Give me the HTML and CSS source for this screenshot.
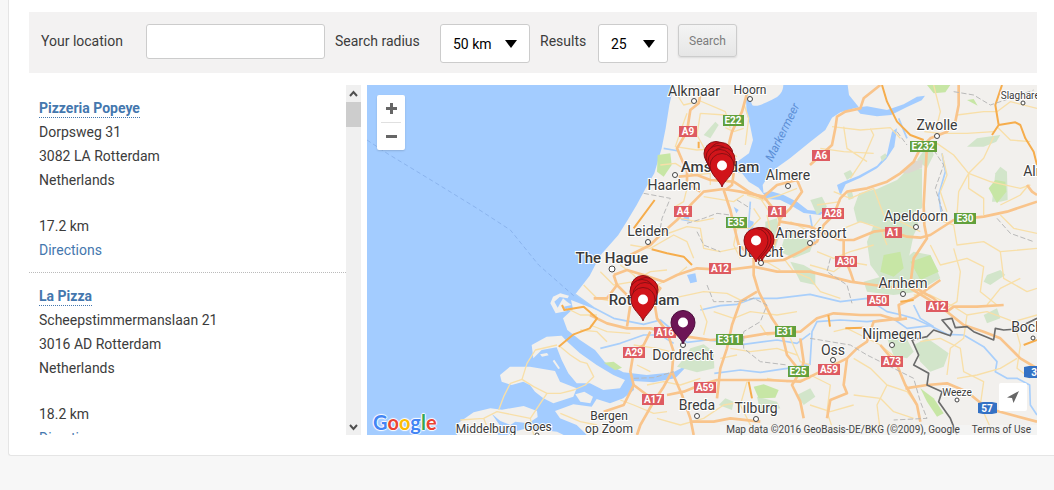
FILE: index.html
```
<!DOCTYPE html>
<html lang="en">
<head>
  <meta charset="UTF-8">
  <title>Store Locator</title>
  <link rel="stylesheet" href="styles.css">
</head>
<body>
  <main class="panel">
    <form class="search">
      <label class="wide" for="location">Your location</label>
      <input type="text" id="location">
      <label class="wide" for="radius">Search radius</label>
      <select id="radius" class="radius">
        <option>10 km</option>
        <option>25 km</option>
        <option selected>50 km</option>
        <option>100 km</option>
      </select>
      <label for="results">Results</label>
      <select id="results">
        <option selected>25</option>
        <option>50</option>
        <option>75</option>
      </select>
      <button type="button">Search</button>
    </form>

    <div class="locator">
      <div class="stores">
        <ul class="store-list">
          <li>
            <a class="name" href="#">Pizzeria Popeye</a>
            <p>Dorpsweg 31</p>
            <p>3082 LA Rotterdam</p>
            <p>Netherlands</p>
            <p class="distance">17.2 km</p>
            <a class="directions" href="#">Directions</a>
          </li>
          <li>
            <a class="name" href="#">La Pizza</a>
            <p>Scheepstimmermanslaan 21</p>
            <p>3016 AD Rotterdam</p>
            <p>Netherlands</p>
            <p class="distance">18.2 km</p>
            <a class="directions" href="#">Directions</a>
          </li>
        </ul>
        <div class="scrollbar">
          <svg width="15" height="17" viewBox="0 0 15 17"><path d="M4 11L7.500 7L11 11"/></svg>
          <div class="thumb"></div>
          <svg width="15" height="17" viewBox="0 0 15 17"><path d="M4 7L7.500 11L11 7"/></svg>
        </div>
      </div>

      <div class="map">
        <svg class="canvas" viewBox="0 0 670 350" preserveAspectRatio="xMinYMin slice">
          <defs>
            <g id="pin">
              <path d="M0 0C-1.500-6-12-12-12-21.500A12 12 0 0 1 12-21.500C12-12 1.500-6 0 0Z"/>
              <circle cy="-21.500" r="5"/>
            </g>
          </defs>

          <!-- terrain and roads, drawn at three times the size -->
          <svg width="670" height="350" viewBox="0 0 2010 1050">
            <rect class="sea" width="2010" height="1050"/>
            <path class="ferry" d="M0 165L60 205L200 290L330 370L430 435L515 540L620 632"/>

            <g class="land">
              <path d="M921 0L907 60L896 130L884 190L862 265L836 310L809 360L782 405L754 450L699 512L668 572L625 628L690 675L612 645L618 672L588 700L601 735L639 765L684 795L714 832L769 862L839 870L919 862L965 838L925 880L859 892L799 888L801 915L769 940L729 955L689 942L674 965L619 958L564 978L579 1000L629 1020L650 1040L659 1050H2010V0Z"/>
              <path d="M494 780L539 755L584 752L601 770L639 805L689 840L739 870L774 885L759 910L709 915L669 895L629 895L604 865L584 825L569 787L524 795L499 820Z"/>
              <path d="M399 870L429 845L489 845L564 858L579 890L629 910L619 935L559 955L529 940L504 920L489 900L469 890L434 900L404 890Z"/>
              <path d="M265 1020L320 982L370 970L405 974L470 963L510 978L512 996L484 1015L445 1010L430 1020L400 1008L374 986L400 1023L392 1050H270Z"/>
              <path d="M420 1050L450 1038L480 1030L570 1040L590 1050Z"/>
              <path d="M625 928L652 920L678 935L670 955L640 950Z"/>
              <path d="M550 655L558 635L580 625L606 632L602 640L578 636L562 650L572 668L588 640L600 650L614 660L590 665L600 678L566 685Z"/>
              <path d="M519 808L540 804L545 811L525 815ZM557 828L562 824L579 850L574 852Z"/>
            </g>

            <g class="lake">
              <path d="M1249 0C1248 20 1239 34 1215 44C1190 55 1172 67 1156 61L1145 32L1137 40L1139 86L1149 120L1158 165L1146 205L1118 225L1100 240L1090 262L1125 265L1145 290L1175 308L1190 328L1187 300L1212 260L1269 220L1330 170L1375 135L1395 98L1420 82L1475 66L1446 30L1442 0Z"/>
              <path d="M1465 68L1500 64L1560 75L1610 58L1650 35L1674 32L1664 46L1620 66L1572 90L1530 94L1480 86Z"/>
              <path d="M1188 325L1210 318L1250 330L1290 350L1322 375L1370 380L1360 390L1310 384L1270 360L1240 345L1200 342Z"/>
              <path d="M1410 300L1430 290L1475 272L1530 242L1560 208L1575 140L1590 130L1582 185L1558 222L1530 250L1480 278L1436 298L1420 332Z"/>
              <path d="M1080 235L1020 228L1015 233L1080 245ZM940 405L965 388L968 410ZM1145 405L1160 410L1158 440L1147 435Z"/>
              <path d="M960 570L985 565L990 590L970 595ZM1100 365L1115 375L1108 385Z"/>
            </g>

            <g class="forest">
              <path d="M1476 325L1530 312L1590 285L1620 255L1665 250L1665 370L1640 380L1655 420L1640 450L1625 520L1640 560L1600 610L1540 580L1510 540L1500 470L1520 420L1470 410L1460 370Z"/>
              <path d="M1650 225L1690 170L1700 210L1680 250Z"/>
              <path d="M1640 500L1690 510L1720 580L1650 620L1580 630L1500 620L1490 590L1560 570Z"/>
              <path d="M1800 185L1830 160L1900 150L1888 170L1850 185Z"/>
              <path d="M970 790L1010 778L1040 800L1042 850L990 862L930 845L955 815Z"/>
              <path d="M1640 780L1680 760L1710 780L1745 805L1730 845L1690 860L1660 830Z"/>
              <path d="M1560 760L1610 745L1640 800L1620 820L1580 812Z"/>
              <path d="M1195 410L1230 400L1240 445L1225 490L1195 480Z"/>
              <path d="M1260 430L1290 450L1340 470L1329 500L1280 520L1240 500Z"/>
              <path d="M1330 345L1365 335L1380 365L1350 390Z"/>
              <path d="M1055 960L1075 940L1100 950L1095 975Z"/>
              <path d="M1860 570L1900 555L1915 570L1870 600L1850 590Z"/>
              <path d="M1885 265L1900 245L1920 260L1922 345L1900 350L1875 350Z"/>
              <path d="M1170 935L1230 950L1240 970L1180 980Z"/>
              <path d="M1290 930L1330 910L1345 935L1310 960Z"/>
              <path d="M1270 530L1310 540L1345 560V600L1300 590Z"/>
              <path d="M1850 690L1890 670L1900 700L1860 715Z"/>
              <path d="M1010 150L1045 110L1055 120L1030 160Z"/>
              <path d="M1430 265L1450 255L1460 270L1440 285ZM1440 325L1455 320L1460 340L1445 345ZM1540 215L1555 205L1560 215L1545 230Z"/>
            </g>
            <g class="park">
              <path d="M872 210L910 205L914 240L890 275L870 260Z"/>
              <path d="M1865 310L1885 285L1915 290L1918 320L1890 355Z"/>
              <path d="M1550 510L1600 500L1610 550L1580 575L1540 560ZM1630 530L1690 510L1715 560L1660 585Z"/>
              <path d="M1160 905L1190 898L1235 915L1225 938L1175 940Z"/>
              <path d="M1660 910L1700 940L1730 985L1710 995L1680 950Z"/>
              <path d="M1800 45L1820 42L1832 62ZM1680 0H1750L1735 22L1700 25Z"/>
              <path d="M710 833L740 830L765 848L745 856Z"/>
            </g>
            <path class="moor" d="M1600 265L1640 228L1668 225L1665 248L1625 265Z"/>

            <g class="river">
              <path d="M625 628L680 668L740 700L830 718L880 705L920 738L960 772L1020 765L1130 778L1230 765L1290 775L1330 745"/>
              <path d="M700 790L760 775L830 750L880 750L920 775M1000 675L1060 662L1110 658L1160 640L1230 640L1329 628L1420 650L1500 640L1560 680L1605 690L1640 700L1690 722L1740 748L1790 750L1850 785L1890 830L1885 860L1920 880L1950 880L1988 900L1990 960L2010 990"/>
              <path d="M1042 865L1120 855L1180 862L1260 850L1329 838L1335 740L1350 710L1420 705L1500 710L1580 702L1620 730L1690 722"/>
              <path d="M1640 660L1660 700L1700 725M1595 100L1620 160M1725 205L1735 260L1715 330L1725 400"/>
              <path d="M1150 350L1145 420L1150 500M1329 390L1345 480M890 190L935 198"/>
            </g>

            <!-- local roads -->
            <g class="minor">
              <path d="M921 15L950 60L1000 48L1075 80L1090 130M960 85L940 140L925 185L990 195L1060 190L1110 215M1000 85L1075 90M1000 85L990 150L1020 205"/>
              <path d="M880 240L925 235L980 270L1030 265L1030 300M905 290L960 310L950 350L925 365L940 400L990 410L1040 400M1010 335L1100 350L1130 330"/>
              <path d="M850 425L890 450L960 425L1000 430L1010 490L1060 500L1130 485M790 480L850 490L920 450L960 470L980 520"/>
              <path d="M1130 130L1100 140L1075 128M1130 55L1145 100L1135 180M1140 330L1190 345L1240 330L1290 310M1180 340L1210 385L1260 380"/>
              <path d="M1160 370L1180 400L1150 430L1110 430L1100 480L1120 520M1200 390L1210 440L1180 520L1240 555"/>
              <path d="M1270 410L1329 440L1360 400L1400 390L1420 370M1250 520L1280 560L1329 580L1360 620L1420 640"/>
              <path d="M1395 125L1480 135L1570 128L1600 160M1430 125L1440 190L1500 230M1510 130L1520 150L1490 220L1450 280M1360 190L1430 200L1520 205"/>
              <path d="M1700 0L1720 80L1710 120M1770 90L1850 80L1890 80L1930 50L2010 70M1890 125L1930 165L1990 170"/>
              <path d="M1710 175L1760 210L1805 265L1870 290L1960 310L1990 300M1880 155L1850 220L1805 265L1775 320L1770 390M1725 205L1740 270L1720 320L1740 380"/>
              <path d="M1672 140L1720 145L1800 145L1880 140M1700 400L1760 420L1770 480L1850 470L1900 500L2010 490"/>
              <path d="M1805 265L1805 310L1850 340L1850 390M1900 360L1960 330L1985 300M1900 390L1940 430L2010 445"/>
              <path d="M1690 480L1720 540L1800 520L1850 545L1840 620L1890 660M1760 490L1780 560L1770 650L1720 680"/>
              <path d="M1400 320L1450 340L1520 310L1550 390L1600 410L1660 440M1430 430L1480 410L1540 430L1560 480"/>
              <path d="M1350 360L1420 350M1350 500L1400 520L1450 500L1520 480M1329 540L1400 560L1440 530L1500 540"/>
              <path d="M1640 630L1690 630L1760 665L1800 690L1860 680L1940 710L2010 690M1800 690L1790 760L1750 790L1740 870"/>
              <path d="M1660 770L1720 760L1780 790L1790 860L1850 890L1840 960L1880 1050M1770 880L1830 870L1900 850L1950 820"/>
              <path d="M1900 500L1910 580L1980 620L2010 610M1860 660L1900 610L1960 580M1940 710L1960 780L1950 850L1990 880"/>
              <path d="M1460 820L1510 850L1560 900L1620 920L1650 960M1460 930L1540 940L1580 980L1640 1000M1560 900L1530 960L1540 1040"/>
              <path d="M1400 740L1440 730L1480 750L1540 780L1600 830M1330 870L1390 900L1380 980L1400 1040M1329 960L1390 980L1460 960"/>
              <path d="M700 560L740 600L800 590L850 560L900 555M650 600L690 640L740 650M690 690L640 690L600 670M670 720L720 740L790 745"/>
              <path d="M760 540L800 570L860 640L900 660M820 620L870 600L930 570L960 545M880 650L940 635L1010 620L1080 625L1130 650"/>
              <path d="M1000 660L1020 710L1010 750M1040 680L1100 700L1150 680L1230 690L1290 680M1090 790L1150 800L1230 790L1290 810M1060 820L1110 810"/>
              <path d="M640 735L690 740L720 770M800 780L870 790L910 800M810 840L850 860M760 945L800 960L860 985L900 980"/>
              <path d="M840 900L890 890L940 900L1000 880M870 1000L940 1020L1010 1000L1070 960L1130 950L1180 970M1140 890L1120 960L1160 1040"/>
              <path d="M580 785L610 810L640 830L660 835L680 875L655 900L620 915L580 925L540 925L500 905L465 883L430 895L410 935L395 975"/>
              <path d="M465 883L480 835L505 795L570 780M280 1005L350 1000L390 980L490 1000L540 925M350 1000L370 1050M490 1000L500 1050M580 985L640 1010L690 1020"/>
              <path d="M1200 880L1260 890L1330 880M1270 760L1300 830L1329 840M1180 720L1200 750L1240 745"/>
            </g>

            <g class="major">
              <path d="M1000 30L995 55L970 75L960 140L930 190L945 225L960 260L960 295L1000 320"/>
              <path d="M1140 25L1125 80L1095 140L1080 200L1100 265L1095 300L1075 315"/>
              <path d="M935 275L990 270L1030 285L1100 290L1145 320L1190 340"/>
              <path d="M790 510L850 480L890 440L930 405L975 355L1010 320L1070 312L1120 320L1190 335L1230 385L1240 410L1329 425L1420 465L1460 465L1520 440L1560 435L1620 455L1660 458L1690 450L1760 405L1850 395L1920 380L2010 350"/>
              <path d="M1070 315L1090 375L1105 440L1115 480L1160 520L1160 570L1175 620L1215 700L1245 745L1260 810L1300 860"/>
              <path d="M1329 240L1395 180L1405 130L1410 95L1435 80L1480 70L1490 40L1540 0"/>
              <path d="M1190 335L1230 300L1290 285L1305 320L1270 370L1240 400L1230 450L1210 510"/>
              <path d="M1180 530L1250 525L1300 500L1350 470L1370 420L1400 390L1420 340L1440 320L1500 310L1560 290L1600 265L1640 230L1660 190L1690 160L1740 140L1765 110L1775 60L1775 0"/>
              <path d="M1680 180L1675 270L1670 360L1672 420L1680 460L1660 490L1640 520L1630 600L1700 640L1740 680"/>
              <path d="M740 570L780 555L830 570L890 590L930 570L990 550L1080 555L1160 545L1230 560L1329 560L1450 590L1520 600L1600 610M1630 610L1680 640L1740 680L1790 720L1850 740L1900 760L1960 820L2010 850"/>
              <path d="M1430 465L1430 510L1450 560L1460 590"/>
              <path d="M740 570L750 600L790 640L800 650M750 600L720 640L680 640"/>
              <path d="M669 690L720 715L780 730L850 730L910 745L960 755L1030 765L1110 760L1200 745L1300 740L1350 700L1400 685L1480 690L1540 690L1590 705L1620 700"/>
              <path d="M780 725L790 660L860 640L880 610L840 580M860 640L870 700L900 740L920 800L915 860L890 905L860 950L820 1020L810 1050"/>
              <path d="M915 860L945 930L970 1000L980 1050M850 740L830 780L800 800L790 860L800 900L770 960L710 980"/>
              <path d="M970 1010L1040 1010L1090 1000L1180 1010"/>
              <path d="M1170 620L1120 650L1095 720L1080 790L1060 850L1050 940"/>
              <path d="M900 930L950 920L1000 900L1050 885L1140 885L1200 885L1300 890L1360 860L1440 820L1470 790L1500 770L1520 710L1600 700L1595 660L1640 640L1670 620L1720 585"/>
              <path d="M1300 860L1275 900L1300 950L1310 1000M1440 820L1430 900L1440 925L1390 945L1380 1000"/>
              <path d="M1540 780L1590 840L1615 900L1650 960L1660 1010M1615 910L1680 900L1740 895L1800 920L1860 970L2010 1010"/>
              <path d="M1740 680L1760 665L1830 665L1910 660"/>
              <path d="M800 900L840 930L880 945M1300 760L1310 830L1300 870"/>
              <path d="M1980 300L1995 320L2010 330"/>
            </g>
            <g class="trunk">
              <path d="M1545 0L1560 50L1590 110L1630 150L1670 165"/>
              <path d="M1905 0L1885 60L1895 120L1945 112L1960 120L1975 160L2000 200L2010 240M1895 120L1875 150"/>
              <path d="M863 345L800 430M854 493L900 505L950 515L975 540"/>
              <path d="M585 660L592 675L650 665L690 700L668 730L620 748L575 785"/>
              <path d="M995 170L995 190M1384 690L1389 725M1435 730L1490 728M1600 650L1640 645M1145 890L1155 940M1970 780L2010 765"/>
            </g>
            <g class="rail">
              <path d="M830 325L910 340L885 400L880 430M960 415L1010 400L1050 385L1090 390M1110 345L1150 370M990 440L1010 480L1060 500"/>
              <path d="M1020 600L1040 650L1110 650L1160 640L1200 660L1180 710L1130 740L1130 790L1180 830L1260 840"/>
              <path d="M1590 140L1620 180M1700 195L1730 240L1705 310L1730 390M1890 400L1930 445L2000 470"/>
              <path d="M1390 520L1380 560L1440 600L1455 655M1329 760L1450 780L1500 810L1600 860L1640 880L1660 950L1680 1000L1580 1005"/>
              <path d="M1760 20L1820 30L1870 60L1930 40L2000 15M800 880L860 878L920 860"/>
            </g>
            <path class="border" d="M2010 700L1980 715L1950 732L1910 735L1885 730L1880 765L1820 740L1800 725L1765 728L1755 700L1725 705L1755 740L1750 752L1700 735L1680 755L1635 765L1655 810L1640 840L1685 865L1680 900L1725 920L1715 950L1750 1000L1770 1050"/>
          </svg>

          <g class="shields red">
            <rect x="312" y="41" width="18" height="11"/><text x="321" y="50">A9</text>
            <rect x="445" y="65" width="18" height="11"/><text x="454" y="74">A6</text>
            <rect x="307" y="121" width="18" height="11"/><text x="316" y="130">A4</text>
            <rect x="401" y="121" width="18" height="11"/><text x="410" y="130">A1</text>
            <rect x="455" y="123" width="22" height="11"/><text x="466" y="132">A28</text>
            <rect x="518" y="142" width="17" height="11"/><text x="526" y="151">A1</text>
            <rect x="342" y="178" width="22" height="11"/><text x="353" y="187">A12</text>
            <rect x="468" y="171" width="22" height="11"/><text x="479" y="180">A30</text>
            <rect x="500" y="210" width="22" height="11"/><text x="511" y="219">A50</text>
            <rect x="559" y="216" width="22" height="11"/><text x="570" y="225">A12</text>
            <rect x="287" y="242" width="22" height="11"/><text x="298" y="251">A16</text>
            <rect x="256" y="262" width="22" height="11"/><text x="267" y="271">A29</text>
            <rect x="327" y="297" width="22" height="11"/><text x="338" y="306">A59</text>
            <rect x="451" y="279" width="22" height="11"/><text x="462" y="288">A59</text>
            <rect x="514" y="271" width="22" height="11"/><text x="525" y="280">A73</text>
            <rect x="275" y="309" width="22" height="11"/><text x="286" y="318">A17</text>
          </g>
          <g class="shields green">
            <rect x="356" y="30" width="21" height="11"/><text x="366" y="39">E22</text>
            <rect x="359" y="132" width="21" height="11"/><text x="369" y="141">E35</text>
            <rect x="543" y="56" width="27" height="11"/><text x="556" y="65">E232</text>
            <rect x="587" y="128" width="22" height="11"/><text x="598" y="137">E30</text>
            <rect x="349" y="249" width="27" height="11"/><text x="362" y="258">E311</text>
            <rect x="408" y="241" width="21" height="11"/><text x="418" y="250">E31</text>
            <rect x="421" y="281" width="21" height="11"/><text x="431" y="290">E25</text>
          </g>
          <g class="shields blue">
            <path d="M611 318L616 317H625L630 318V328L625 329H616L611 328Z"/><text x="620" y="327">57</text>
            <path d="M657 282L662 281H670V293H662L657 292Z"/><text x="667" y="291">3</text>
          </g>

          <g class="dots">
            <circle cx="327" cy="16" r="2.500"/><circle cx="383" cy="14" r="2.500"/>
            <circle cx="308" cy="90" r="2.500"/><circle cx="421" cy="101" r="2.500"/>
            <circle cx="281" cy="157" r="2.500"/><circle cx="443" cy="158" r="2.500"/>
            <circle cx="394" cy="178" r="2.500"/><circle cx="245" cy="184" r="3"/>
            <circle cx="316" cy="260" r="2.500"/><circle cx="330" cy="331" r="2.500"/>
            <circle cx="389" cy="334" r="2.500"/><circle cx="570" cy="51" r="2.500"/>
            <circle cx="656" cy="18" r="2"/><circle cx="549" cy="142" r="2.500"/>
            <circle cx="536" cy="209" r="2.500"/><circle cx="525" cy="260" r="2.500"/>
            <circle cx="466" cy="275" r="2.500"/><circle cx="590" cy="315" r="2"/>
            <circle cx="666" cy="253" r="2"/><circle cx="170" cy="350" r="2"/>
          </g>
          <g class="towns">
            <text x="327" y="11">Alkmaar</text>
            <text class="small" x="383" y="9">Hoorn</text>
            <text class="city" x="353" y="87">Amsterdam</text>
            <text x="307" y="105">Haarlem</text>
            <text x="421" y="95">Almere</text>
            <text x="281" y="151">Leiden</text>
            <text x="444" y="153">Amersfoort</text>
            <text class="city" x="245" y="178">The Hague</text>
            <text x="394" y="172">Utrecht</text>
            <text class="city" x="277" y="220">Rotterdam</text>
            <text x="316" y="275">Dordrecht</text>
            <text class="small" x="242" y="335">Bergen</text>
            <text class="small" x="242" y="348">op Zoom</text>
            <text class="small" x="119" y="348">Middelburg</text>
            <text class="small" x="171" y="346">Goes</text>
            <text x="330" y="325">Breda</text>
            <text x="389" y="328">Tilburg</text>
            <text x="570" y="45">Zwolle</text>
            <text x="549" y="136">Apeldoorn</text>
            <text x="536" y="203">Arnhem</text>
            <text x="525" y="254">Nijmegen</text>
            <text x="466" y="270">Oss</text>
            <text class="village" x="590" y="311">Weeze</text>
            <text class="village" x="656" y="14">Slagharen</text>
            <text x="678" y="91">Almelo</text>
            <text x="668" y="247">Bocholt</text>
          </g>
          <text class="water-name" transform="translate(419 49) rotate(-64)">Markermeer</text>

          <g class="pins">
            <use href="#pin" x="349" y="90"/><use href="#pin" x="354" y="91"/>
            <use href="#pin" x="351" y="94"/><use href="#pin" x="356" y="96"/>
            <use href="#pin" x="353" y="98"/><use href="#pin" x="355" y="102"/>
            <use href="#pin" x="395" y="176"/><use href="#pin" x="392" y="176"/>
            <use href="#pin" x="389" y="177"/>
            <use href="#pin" x="276" y="224"/><use href="#pin" x="279" y="226"/>
            <use href="#pin" x="275" y="228"/><use href="#pin" x="278" y="231"/>
            <use href="#pin" x="276" y="236"/>
            <use class="start" href="#pin" x="316" y="259"/>
          </g>
        </svg>

        <div class="zoom">
          <button type="button" aria-label="Zoom in"><svg width="11" height="11" viewBox="0 0 11 11"><path d="M0 5.500H11M5.500 0V11"/></svg></button>
          <button type="button" aria-label="Zoom out"><svg width="11" height="11" viewBox="0 0 11 11"><path d="M0 5.500H11"/></svg></button>
        </div>
        <button type="button" class="locate" aria-label="Find my location"><svg width="12" height="12" viewBox="0 0 12 12"><path d="M12 0L0 6.500L5 7L6.500 12Z"/></svg></button>
        <div class="logo"><span class="b">G</span><span class="r">o</span><span class="y">o</span><span class="b">g</span><span class="g">l</span><span class="r">e</span></div>
        <div class="credits">
          <span>Map data ©2016 GeoBasis-DE/BKG (©2009), Google</span>
          <a href="#">Terms of Use</a>
        </div>
      </div>
    </div>
  </main>
</body>
</html>
```

FILE: styles.css
```
* {
  box-sizing: border-box;
}

body {
  margin: 0;
  background: #f7f7f7;
  color: #3c3c3c;
  font: 14px/24px Roboto, "Liberation Sans", sans-serif;
}

a {
  color: #4477ae;
  text-decoration: none;
}

.panel {
  margin-left: 8px;
  padding: 12px 17px 20px 20px;
  background: #fff;
  border: 1px solid #e5e5e5;
  border-width: 0 0 1px 1px;
  border-bottom-left-radius: 3px;
}

/* search bar */
.search {
  display: flex;
  align-items: flex-start;
  gap: 10px;
  padding: 12px 12px 10px;
  background: #f3f2f2;
}

.search label {
  width: 48px;
  padding-top: 5px;
}

.search .wide {
  width: 95px;
}

.search input,
.search select {
  border: 1px solid #ccc;
  border-radius: 3px;
  background: #fff;
  font: inherit;
}

.search input {
  width: 179px;
  height: 35px;
  padding: 0 10px;
}

.search select {
  width: 70px;
  height: 39px;
  padding: 0 12px;
  color: #000;
  appearance: none;
  background: #fff url("data:image/svg+xml,%3Csvg xmlns='http://www.w3.org/2000/svg' viewBox='0 0 12 8'%3E%3Cpath d='M0 0H12L6 8Z'/%3E%3C/svg%3E") no-repeat right 12px center / 12px 8px;
}

.search .radius {
  width: 90px;
}

.search button {
  height: 33px;
  padding: 0 10px;
  border: 1px solid #ccc;
  border-radius: 3px;
  background: linear-gradient(#f4f4f4, #e6e6e6);
  box-shadow: 0 1px 2px rgba(0, 0, 0, 0.1);
  color: #7c7c7c;
  font: 12px Roboto, "Liberation Sans", sans-serif;
}

.locator {
  display: flex;
  gap: 6px;
  height: 350px;
  margin-top: 12px;
}

/* store list */
.stores {
  display: flex;
  flex: 0 0 332px;
}

.store-list {
  flex: 1;
  margin: 0;
  padding: 0;
  list-style: none;
  overflow-y: scroll;
  scrollbar-width: none;
}

.store-list li {
  padding: 11px 10px 10px;
  border-bottom: 1px dotted #bbb;
}

.store-list p {
  margin: 0;
}

.store-list .name {
  display: block;
  width: fit-content;
  height: 22px;
  margin-bottom: 2px;
  border-bottom: 1px dotted #4477ae;
  font-weight: bold;
}

.store-list .distance {
  margin-top: 22px;
}

.store-list .directions {
  display: block;
}

.scrollbar {
  display: flex;
  flex-direction: column;
  width: 15px;
  background: #f0f0f0;
}

.scrollbar svg {
  fill: none;
  stroke: #505050;
  stroke-width: 2;
}

.thumb {
  height: 25px;
  margin-bottom: auto;
  background: #cdcdcd;
}

/* map */
.map {
  position: relative;
  flex: 1;
  overflow: hidden;
  background: #a3ccff;
}

.canvas {
  display: block;
  width: 100%;
  height: 100%;
}

.sea,
.lake {
  fill: #a3ccff;
}

.land {
  fill: #f2f0ed;
}

.forest {
  fill: #d2e5ca;
}

.park {
  fill: #c7e6a5;
}

.moor {
  fill: #ddd8d0;
}

.river,
.minor,
.major,
.trunk,
.rail,
.border,
.ferry {
  fill: none;
  stroke-linejoin: round;
}

.river {
  stroke: #a9cffb;
  stroke-width: 5;
}

.minor {
  stroke: #f8dfa8;
  stroke-width: 4;
}

.major {
  stroke: #f9c48b;
  stroke-width: 8;
}

.trunk {
  stroke: #f6ad4c;
  stroke-width: 6;
}

.rail {
  stroke: #b9b9b9;
  stroke-width: 3;
  stroke-dasharray: 16 7;
}

.border {
  stroke: #6b6b6b;
  stroke-width: 5;
}

.ferry {
  stroke: #8bb4ee;
  stroke-width: 3;
  stroke-dasharray: 13 9;
}

.shields text {
  fill: #fff;
  font-size: 10px;
  font-weight: bold;
  text-anchor: middle;
}

.red {
  fill: #de5b61;
}

.green {
  fill: #62a03c;
}

.blue {
  fill: #3471c4;
}

.dots {
  fill: #fff;
  stroke: #444;
}

.towns {
  fill: #3a3a3a;
  stroke: #fff;
  stroke-width: 2px;
  paint-order: stroke;
  font-size: 14px;
  text-anchor: middle;
}

.towns .city {
  font-weight: 500;
  font-size: 15px;
}

.towns .small {
  font-size: 12px;
}

.towns .village {
  font-size: 10px;
}

.water-name {
  fill: #5c8fd6;
  font-size: 12px;
  font-style: italic;
  text-anchor: middle;
}

.pins {
  fill: #d1141a;
  stroke: #8a0f13;
}

.pins .start {
  fill: #6d1556;
  stroke: #4b0d3b;
}

#pin circle {
  fill: #fff;
  stroke: none;
}

.zoom {
  position: absolute;
  top: 10px;
  left: 10px;
  width: 28px;
  padding: 0 4px;
  border-radius: 2px;
  background: #fff;
  box-shadow: 0 1px 2px rgba(0, 0, 0, 0.15);
}

.zoom button {
  display: flex;
  align-items: center;
  justify-content: center;
  width: 100%;
  height: 27px;
  padding: 0;
  border: 0;
  background: none;
}

.zoom button + button {
  height: 28px;
  border-top: 1px solid #e0e0e0;
}

.zoom svg {
  stroke: #666;
  stroke-width: 3;
}

.locate {
  position: absolute;
  right: 10px;
  bottom: 24px;
  display: flex;
  align-items: center;
  justify-content: center;
  width: 28px;
  height: 28px;
  padding: 0;
  border: 0;
  border-radius: 2px;
  background: #fff;
}

.locate svg {
  fill: #666;
}

.logo {
  position: absolute;
  left: 6px;
  bottom: 0;
  font: bold 20px/26px Lato, sans-serif;
  text-shadow: 0 0 1px #fff, 1px 0 1px #fff, -1px 0 1px #fff, 0 1px 1px #fff, 0 -1px 1px #fff;
}

.logo .b {
  color: #4285f4;
}

.logo .r {
  color: #ea4335;
}

.logo .y {
  color: #fbbc05;
}

.logo .g {
  color: #34a853;
}

.credits {
  position: absolute;
  right: 0;
  bottom: 0;
  display: flex;
  gap: 12px;
  padding: 0 6px;
  background: rgba(245, 245, 245, 0.7);
  font-size: 10px;
  line-height: 10px;
}

.credits,
.credits a {
  color: #444;
}
```
